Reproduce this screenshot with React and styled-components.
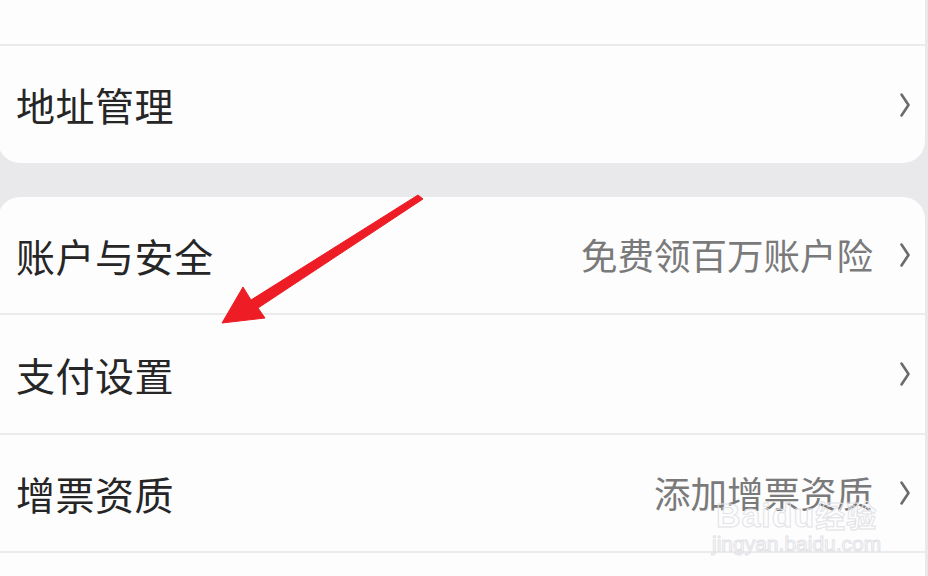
import React from 'react'
import styled, {createGlobalStyle} from 'styled-components'

const colors = {
	page: '#e9e9eb',
	card: '#fdfdfe',
	line: '#ebebee',
	title: '#262626',
	hint: '#7a7a7a',
	chevron: '#6b6b6b',
	arrow: '#ee1c25',
}

const Global = createGlobalStyle`
	html, body {
		margin: 0;
		padding: 0;
		background: ${colors.page};
		font-family: "Noto Sans CJK SC", "Noto Sans", sans-serif;
	}
`

const Page = styled.div`
	position: relative;
	width: 928px;
	height: 576px;
	overflow: hidden;
	display: flex;
	flex-direction: column;
	gap: 34px;
	padding-right: 3px;
	box-sizing: border-box;
`

const Card = styled.div`
	flex: none;
	background: ${colors.card};
	border-radius: ${p => p.$top ? '22px 22px 0 0' : '0 0 22px 22px'};
	margin-left: -2px;
	display: flex;
	flex-direction: column;
	overflow: hidden;
`

const Row = styled.div`
	height: ${p => p.$h || 118}px;
	flex: none;
	display: flex;
	align-items: center;
	padding: 0 14px 0 18px;
	border-bottom: ${p => p.$last ? 'none' : `2px solid ${colors.line}`};
	box-sizing: border-box;
`

const Title = styled.div`
	flex: 1;
	font-size: 39px;
	line-height: 1;
	color: ${colors.title};
	letter-spacing: 0.5px;
`

const Hint = styled.div`
	font-size: 36.5px;
	line-height: 1;
	color: ${colors.hint};
	margin-right: 26px;
`

const Watermark = styled.div`
	position: absolute;
	left: 712px;
	top: 496px;
	display: flex;
	flex-direction: column;
	align-items: center;
	color: transparent;
	-webkit-text-stroke: 1px #e2e2e5;
	font-family: "Liberation Sans", sans-serif;
	pointer-events: none;
`

const MarkLogo = styled.div`
	font-size: 34px;
	font-weight: bold;
	line-height: 36px;
	letter-spacing: 1px;
	span {
		font-family: "Noto Sans CJK SC", sans-serif;
		font-size: 30px;
	}
`

const MarkUrl = styled.div`
	font-size: 21px;
	line-height: 22px;
`

const Overlay = styled.svg`
	position: absolute;
	left: 0;
	top: 0;
	pointer-events: none;
`

const Chevron = () => (
	<svg width='12' height='26' viewBox='0 0 12 26'>
		<path d='M2.5 2.5 L9.5 13 L2.5 23.5' fill='none' stroke={colors.chevron} strokeWidth='2.6' strokeLinecap='round' strokeLinejoin='round'/>
	</svg>
)

const Item = ({title, hint, ...rest}) => (
	<Row {...rest}>
		<Title>{title}</Title>
		{hint && <Hint>{hint}</Hint>}
		{title && <Chevron/>}
	</Row>
)

const App = () => (
	<>
		<Global/>
		<Page>
			<Card>
				<Row $h={46}/>
				<Item title='地址管理' $h={117} $last/>
			</Card>
			<Card $top>
				<Item title='账户与安全' hint='免费领百万账户险'/>
				<Item title='支付设置' $h={120}/>
				<Item title='增票资质' hint='添加增票资质'/>
				<Row $last/>
			</Card>
			<Watermark>
				<MarkLogo>Baidu<span>经验</span></MarkLogo>
				<MarkUrl>jingyan.baidu.com</MarkUrl>
			</Watermark>
			<Overlay width='928' height='576'>
				<polygon
					points='418,195 423,199 258,308 265,318 222,323 243,287 251,300'
					fill={colors.arrow}
					strokeLinejoin='round'
					stroke={colors.arrow}
					strokeWidth='1'
				/>
			</Overlay>
		</Page>
	</>
)

export default App
